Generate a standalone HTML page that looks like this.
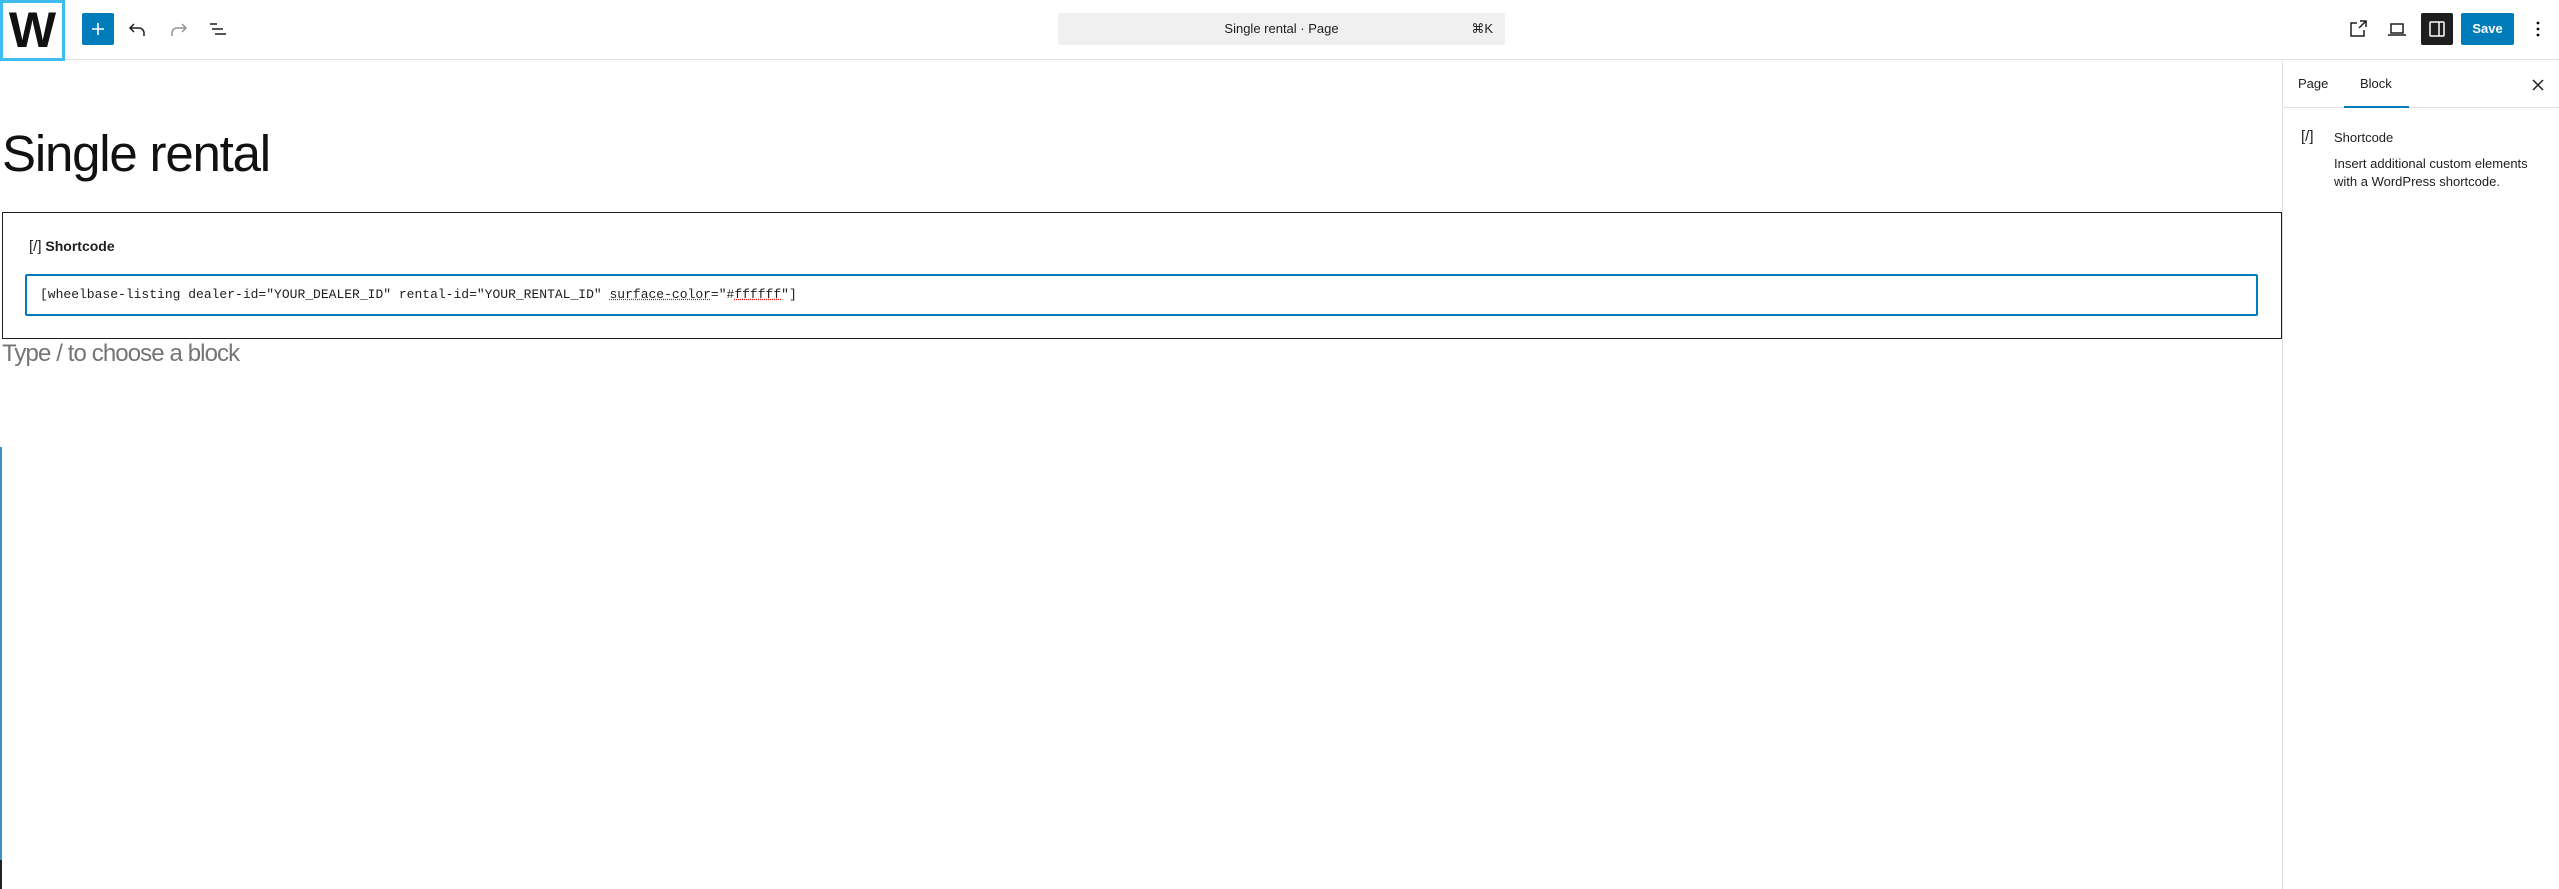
<!DOCTYPE html>
<html><head><meta charset="utf-8"><style>
*{margin:0;padding:0;box-sizing:border-box}
body{width:2559px;height:889px;position:relative;overflow:hidden;background:#fff;font-family:"Liberation Sans",sans-serif;color:#1e1e1e}
.a{position:absolute}
svg{display:block}
</style></head><body>
<div class="a" style="left:0;top:0;width:2559px;height:60px;border-bottom:1px solid #e0e0e0"></div>
<div class="a" style="left:0;top:0;width:65px;height:61px;border:3px solid #3ebbef;background:#fff;font-weight:bold;font-size:50px;line-height:55px;text-align:center;color:#111">W</div>
<div class="a" style="left:82px;top:13px;width:32px;height:32px;background:#007cba;border-radius:2px"><svg width="32" height="32"><path d="M16 10v12M10 16h12" stroke="#fff" stroke-width="1.6"/></svg></div>
<svg class="a" style="left:126px;top:17px" width="24" height="24"><path d="M8 7L4 11l4 4M4 11h9a5 5 0 0 1 5 5v3" fill="none" stroke="#1e1e1e" stroke-width="1.5"/></svg>
<svg class="a" style="left:166px;top:17px" width="24" height="24"><path d="M16 7l4 4-4 4M20 11h-9a5 5 0 0 0-5 5v3" fill="none" stroke="#949494" stroke-width="1.5"/></svg>
<svg class="a" style="left:206px;top:17px" width="24" height="24"><path d="M4 7h7M6 12h11M9 17h11" stroke="#1e1e1e" stroke-width="1.5"/></svg>
<div class="a" style="left:1058px;top:13px;width:447px;height:32px;background:#f0f0f0;border-radius:2px;font-size:13px;line-height:32px;text-align:center">Single rental · Page<span class="a" style="right:12px;top:0">⌘K</span></div>
<svg class="a" style="left:2346px;top:17px" width="24" height="24"><path d="M11 6H5v13h13v-6M13 11l7-7M14 4h6v6" fill="none" stroke="#1e1e1e" stroke-width="1.5"/></svg>
<svg class="a" style="left:2385px;top:17px" width="24" height="24"><path d="M6 7h12v9H6zM3 18h18" fill="none" stroke="#1e1e1e" stroke-width="1.5"/></svg>
<div class="a" style="left:2421px;top:13px;width:32px;height:32px;background:#1e1e1e;border-radius:2px"><svg width="32" height="32"><rect x="9" y="9" width="14" height="14" rx="1" fill="none" stroke="#fff" stroke-width="1.5"/><path d="M18 9v14" stroke="#fff" stroke-width="1.5"/></svg></div>
<div class="a" style="left:2461px;top:13px;width:53px;height:32px;background:#007cba;border-radius:2px;color:#fff;font-size:13px;font-weight:bold;line-height:32px;text-align:center">Save</div>
<svg class="a" style="left:2530px;top:17px" width="16" height="24"><circle cx="8" cy="6" r="1.4"/><circle cx="8" cy="12" r="1.4"/><circle cx="8" cy="18" r="1.4"/></svg>
<div class="a" style="left:2282px;top:61px;width:1px;height:828px;background:#e0e0e0"></div>
<div class="a" style="left:2283px;top:107px;width:276px;height:1px;background:#e0e0e0"></div>
<div class="a" style="left:2298px;top:76px;font-size:13px">Page</div>
<div class="a" style="left:2360px;top:76px;font-size:13px">Block</div>
<div class="a" style="left:2344px;top:106px;width:65px;height:2px;background:#007cba"></div>
<svg class="a" style="left:2530px;top:77px" width="16" height="16"><path d="M3 3l10 10M13 3L3 13" stroke="#1e1e1e" stroke-width="1.5"/></svg>
<div class="a" style="left:2301px;top:128px;font-size:15px">[/]</div>
<div class="a" style="left:2334px;top:130px;font-size:13px;font-weight:500">Shortcode</div>
<div class="a" style="left:2334px;top:155px;font-size:13px;line-height:18px">Insert additional custom elements<br>with a WordPress shortcode.</div>
<div class="a" style="left:2px;top:124px;font-size:51px;letter-spacing:-1.2px;color:#111">Single rental</div>
<div class="a" style="left:2px;top:212px;width:2280px;height:127px;border:1px solid #1e1e1e"></div>
<div class="a" style="left:29px;top:238px;font-size:14px;font-weight:bold"><span style="font-weight:normal;font-size:15px">[/]</span> Shortcode</div>
<div class="a" style="left:25px;top:274px;width:2233px;height:42px;border:2px solid #007cba;border-radius:2px"></div>
<div class="a" style="left:40px;top:287px;font-family:'Liberation Mono',monospace;font-size:13px;white-space:pre">[wheelbase-listing dealer-id="YOUR_DEALER_ID" rental-id="YOUR_RENTAL_ID" <span style="text-decoration:underline dotted red">surface-color</span>="#<span style="text-decoration:underline dotted red">ffffff</span>"]</div>
<div class="a" style="left:2px;top:340px;font-size:24px;color:#757575;letter-spacing:-0.9px">Type / to choose a block</div>
<div class="a" style="left:0;top:447px;width:2px;height:413px;background:#3a8fc7"></div>
<div class="a" style="left:0;top:860px;width:2px;height:29px;background:#222"></div>
</body></html>
